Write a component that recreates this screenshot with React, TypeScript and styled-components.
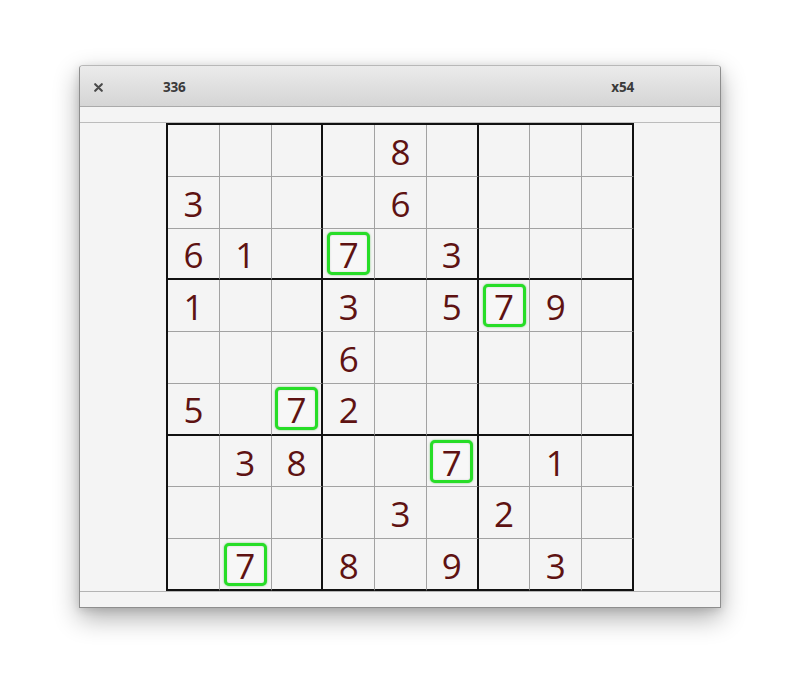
import React from "react";
import styled, { createGlobalStyle } from "styled-components";

const GlobalStyle = createGlobalStyle`
  html, body { margin: 0; padding: 0; background: #ffffff; }
  body { font-family: "Open Sans", "DejaVu Sans", sans-serif; }
`;

const Page = styled.div`
  padding: 65px 0 93px 79px;
  min-height: 700px;
  box-sizing: border-box;
`;

const Window = styled.div`
  width: 642px;
  box-sizing: border-box;
  border: 1px solid #8e8e8e;
  border-top-color: #b8b8b8;
  border-radius: 4px 4px 0 0;
  background: #f4f4f4;
  box-shadow: 0 10px 26px rgba(0, 0, 0, 0.32), 0 2px 8px rgba(0, 0, 0, 0.12);
  display: flex;
  flex-direction: column;
`;

const TitleBar = styled.div`
  height: 40px;
  border-bottom: 1px solid #aaaaaa;
  border-radius: 3px 3px 0 0;
  background: linear-gradient(#ebebeb, #d5d5d5);
  display: grid;
  grid-template-columns: 83px 1fr 86px;
  align-items: center;
`;

const CloseButton = styled.div`
  display: flex;
  align-items: center;
  padding-left: 14px;
  height: 100%;
  padding-top: 2px;
  box-sizing: border-box;
`;

const TitleCenter = styled.div`
  display: flex;
  justify-content: space-between;
  align-items: center;
  padding-top: 2px;
`;

const TitleText = styled.span`
  font-family: "Open Sans", "DejaVu Sans", sans-serif;
  font-weight: 700;
  font-size: 13.5px;
  color: #3a3a3a;
  letter-spacing: -0.2px;
`;

const Strip = styled.div`
  height: 15px;
  border-bottom: 1px solid #bcbcbc;
`;

const BottomStrip = styled.div`
  height: 15px;
`;

const Board = styled.div`
  height: 468px;
  border-bottom: 1px solid #b4b4b4;
  display: flex;
  justify-content: center;
`;

const Grid = styled.div`
  width: 468px;
  height: 468px;
  box-sizing: border-box;
  border-left: 2px solid #111;
  border-top: 2px solid #111;
  display: grid;
  grid-template-columns: repeat(9, 1fr);
  grid-template-rows: repeat(9, 1fr);
`;

const Cell = styled.div<{ $thickR: boolean; $thickB: boolean }>`
  box-sizing: border-box;
  border-right: ${(p) => (p.$thickR ? "2px solid #111" : "1px solid #a2a2a2")};
  border-bottom: ${(p) => (p.$thickB ? "2px solid #111" : "1px solid #a2a2a2")};
  display: flex;
  align-items: center;
  justify-content: center;
  background: #f4f4f4;
`;

const Digit = styled.span`
  font-family: "Open Sans", "DejaVu Sans", sans-serif;
  font-size: 35px;
  color: #5e1212;
  line-height: 1;
  padding-top: 2px;
`;

const Highlight = styled.div`
  width: 43px;
  height: 43px;
  box-sizing: border-box;
  border: 3px solid #27dd27;
  border-radius: 5px;
  background: #f7f7f7;
  box-shadow: 0 0 2px rgba(20, 170, 20, 0.6), inset 0 0 2px rgba(0, 0, 0, 0.15);
  display: flex;
  align-items: center;
  justify-content: center;
`;

const puzzle: string[] = [
  "....8....",
  "3...6....",
  "61.H.3...",
  "1..3.5H9.",
  "...6.....",
  "5.H2.....",
  ".38..H.1.",
  "....3.2..",
  ".H.8.9.3.",
];

const CloseIcon = () => (
  <svg width="9" height="9" viewBox="0 0 9 9">
    <path d="M1.2 1.2 L7.8 7.8 M7.8 1.2 L1.2 7.8" stroke="#4a4a4a" strokeWidth="2.1" strokeLinecap="round" />
  </svg>
);

export default function App() {
  return (
    <>
      <GlobalStyle />
      <Page>
        <Window>
          <TitleBar>
            <CloseButton>
              <CloseIcon />
            </CloseButton>
            <TitleCenter>
              <TitleText>336</TitleText>
              <TitleText>x54</TitleText>
            </TitleCenter>
            <div />
          </TitleBar>
          <Strip />
          <Board>
            <Grid>
              {puzzle.map((row, r) =>
                row.split("").map((ch, c) => (
                  <Cell key={`${r}-${c}`} $thickR={c % 3 === 2} $thickB={r % 3 === 2}>
                    {ch === "H" ? (
                      <Highlight>
                        <Digit>7</Digit>
                      </Highlight>
                    ) : ch !== "." ? (
                      <Digit>{ch}</Digit>
                    ) : null}
                  </Cell>
                ))
              )}
            </Grid>
          </Board>
          <BottomStrip />
        </Window>
      </Page>
    </>
  );
}
